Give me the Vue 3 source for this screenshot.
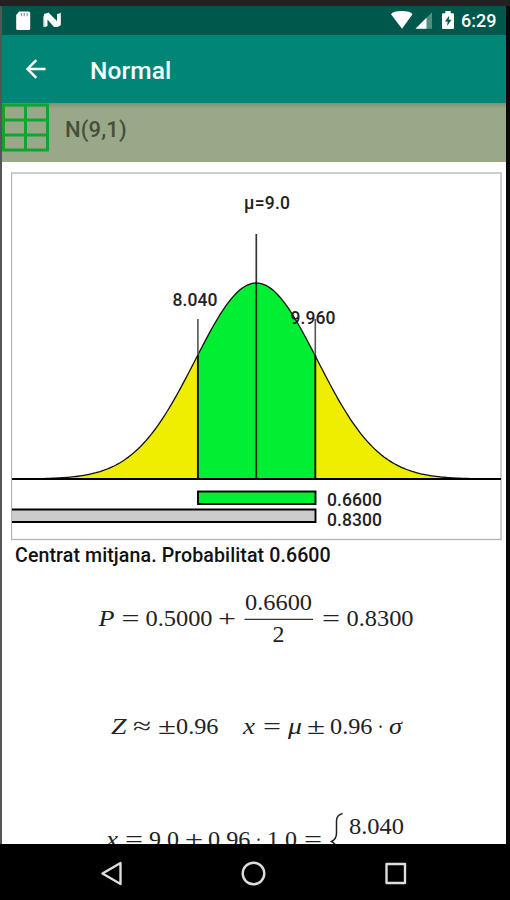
<template>
  <div class="device">
    <div class="screen">
      <header class="status-bar">
        <svg class="status-left" viewBox="0 0 60 29">
          <path d="M19 5.500h9.500q1.500 0 1.500 1.500v15.500q0 1.500-1.500 1.500h-11q-1.500 0-1.500-1.500V9z" transform="translate(-1.800 0)" fill="#fff" />
          <path d="M19.500 7v3.200M22.300 7v3.200M25.200 7v3.200" stroke="#8aa89f" stroke-width="1.300" />
          <path d="M41 10.500 44 8v12l-3 1zM56 8.500l3-2v12.500l-3 1.500z" fill="#9dbbb3" />
          <path d="M42 8 46.500 6.500l8.500 8.500V8l3.500-.8v12L55.500 21H52l-6.500-7.500V20l-3 1.200z" fill="#fff" />
        </svg>
        <div class="status-right">
          <svg class="status-icons" viewBox="0 0 66 29">
            <path d="M0 8.300Q2 5 10.700 5t10.800 3.300L11 22.700z" fill="#fff" />
            <path d="M24.500 22.700 41 6.300v16.400z" fill="#4f8f82" />
            <path d="M24.500 22.700 35.500 11.700v11z" fill="#fff" />
            <path d="M52 7.200h2.300V5h5.400v2.200h2.300q1 0 1 1v13.700q0 1-1 1H52q-1 0-1-1V8.200q0-1 1-1z" fill="#fff" />
            <path d="M58.300 9.500 54 15.500h2.700l-.6 4.500 4.400-6.300h-2.800z" fill="#00574b" />
          </svg>
          <span class="clock">6:29</span>
        </div>
      </header>

      <nav class="app-bar">
        <button class="back" aria-label="Enrere">
          <svg viewBox="0 0 20 20">
            <path d="M19.500 10H1.800M10.300 1.200 1.500 10l8.800 8.800" fill="none" stroke="#fff" stroke-width="2.400" />
          </svg>
        </button>
        <h1>Normal</h1>
      </nav>

      <div class="distribution">
        <svg class="table-icon" viewBox="0 0 47 49">
          <path
            d="M1.500 2h44v45h-44zM23.500 2v45M1.500 17h44M1.500 32h44"
            fill="none"
            stroke="#10a52f"
            stroke-width="3"
          />
        </svg>
        <span>N(9,1)</span>
      </div>

      <main class="content">
        <svg class="chart" viewBox="11 172 491 369">
          <rect x="11.500" y="173" width="489.500" height="366.500" fill="#fff" stroke="#b4b4b4" stroke-width="1.300" />
          <path :d="area(12, lower)" fill="#f0ee00" />
          <path :d="area(upper, 501)" fill="#f0ee00" />
          <path :d="area(lower, upper)" fill="#00ef33" />
          <path :d="curve(40, 472)" fill="none" stroke="#111" stroke-width="1.300" />
          <path d="M12 479H501" stroke="#000" stroke-width="2" />
          <path d="M256.300 234V479" stroke="#000" stroke-opacity=".8" stroke-width="1.700" />
          <path d="M197.900 319V356M315.300 319V356" stroke="#555" stroke-width="1.600" />
          <path d="M197.900 355V479M315.300 355V479" stroke="#061500" stroke-width="1.900" />
          <rect x="198" y="491.500" width="117.500" height="12.500" fill="#00ef33" stroke="#000" stroke-width="1.900" />
          <path d="M12 509.500H315.500V522H12" fill="#ccc" stroke="#000" stroke-width="1.900" />
          <text
            v-for="label in labels"
            :key="label.text"
            :x="label.x"
            :y="label.y"
            :textLength="label.width"
          >{{ label.text }}</text>
        </svg>

        <h2>Centrat mitjana. Probabilitat 0.6600</h2>

        <svg class="formulas" viewBox="2 572 504 272">
          <text
            v-for="(term, index) in terms"
            :key="index"
            :x="term[1]"
            :y="term[2]"
            :textLength="term[3]"
            lengthAdjust="spacingAndGlyphs"
            :class="{ variable: term[4] }"
          >{{ term[0] }}</text>
          <path d="M244.500 619.400H313" stroke="#333" stroke-width="1.200" />
          <path
            d="M342.500 813.500Q336.500 815 336.500 821V833Q336.500 839 331.500 841.500Q336.500 844 336.500 850"
            fill="none"
            stroke="#222"
            stroke-width="1.500"
          />
        </svg>
      </main>
    </div>

    <footer class="nav-bar">
      <svg viewBox="0 0 510 56">
        <g fill="none" stroke="#ddd" stroke-width="2.400" stroke-linejoin="round">
          <path d="M120.500 19v21L102.500 29.500z" />
          <circle cx="253.500" cy="29.500" r="10.800" />
          <rect x="386.500" y="20" width="18.500" height="19" />
        </g>
      </svg>
    </footer>
  </div>
</template>

<script setup>
const mean = 256.3;
const sigma = 61.1;
const baseline = 479;
const peak = 196;
const lower = mean - 0.96 * sigma;
const upper = mean + 0.96 * sigma;

const height = (x) => baseline - peak * Math.exp(-0.5 * ((x - mean) / sigma) ** 2);

const curve = (from, to) => {
  const points = [];
  for (let x = from; x < to; x += 2) {
    points.push(`${x.toFixed(1)} ${height(x).toFixed(2)}`);
  }
  points.push(`${to.toFixed(1)} ${height(to).toFixed(2)}`);
  return `M${points.join('L')}`;
};

const area = (from, to) => `${curve(from, to)}V${baseline}H${from.toFixed(1)}Z`;

const labels = [
  { text: 'μ=9.0', x: 244, y: 209, width: 46 },
  { text: '8.040', x: 172.5, y: 306, width: 45 },
  { text: '9.960', x: 290.5, y: 324, width: 45 },
  { text: '0.6600', x: 327, y: 505.5, width: 55 },
  { text: '0.8300', x: 327, y: 525.5, width: 55 },
];

// text, x, y, width, italic
const terms = [
  ['P', 98.5, 625.5, 16, true],
  ['=', 121.5, 625.5, 18],
  ['0.5000', 145.5, 625.5, 67],
  ['+', 218, 625.5, 18],
  ['0.6600', 245, 609.5, 67],
  ['2', 272.5, 641.5, 12],
  ['=', 322, 625.5, 18],
  ['0.8300', 346.5, 625.5, 67],
  ['Z', 111, 733.5, 15.5, true],
  ['≈', 133, 733.5, 18],
  ['±', 158, 733.5, 18],
  ['0.96', 176, 733.5, 42.5],
  ['x', 243, 733.5, 12, true],
  ['=', 263, 733.5, 18],
  ['μ', 288, 733.5, 14, true],
  ['±', 307, 733.5, 18],
  ['0.96', 330, 733.5, 42.5],
  ['·', 377.5, 733.5, 6],
  ['σ', 389, 733.5, 13, true],
  ['x', 106, 846.5, 12, true],
  ['=', 125, 846.5, 18],
  ['9.0', 149, 846.5, 30],
  ['±', 185, 846.5, 18],
  ['0.96', 208, 846.5, 42.5],
  ['·', 255.5, 846.5, 6],
  ['1.0', 267, 846.5, 30],
  ['=', 304, 846.5, 18],
  ['8.040', 349, 833.5, 55],
];
</script>

<style>
body {
  margin: 0;
}
</style>

<style scoped>
.device {
  width: 510px;
  height: 900px;
  box-sizing: border-box;
  padding-top: 6px;
  background: #222;
  font-family: Roboto, sans-serif;
  overflow: hidden;
}

.screen {
  height: 838px;
  box-sizing: border-box;
  border-left: 2px solid #555;
  border-right: 4px solid #090909;
  background: #fff;
  overflow: hidden;
}

.status-bar {
  height: 29px;
  display: flex;
  justify-content: space-between;
  background: #00574b;
}

.status-left {
  width: 60px;
  height: 29px;
}

.status-right {
  display: flex;
  align-items: center;
  padding-right: 11px;
}

.status-icons {
  width: 66px;
  height: 29px;
}

.clock {
  width: 34px;
  margin-left: 4px;
  color: #fff;
  font-size: 18px;
  font-weight: 500;
  white-space: nowrap;
}

.app-bar {
  height: 68px;
  display: flex;
  align-items: center;
  background: #008577;
  color: #fff;
}

.back {
  display: flex;
  margin: 0 0 0 24px;
  padding: 0;
  border: none;
  background: none;
}

.back svg {
  width: 20px;
  height: 20px;
}

.app-bar h1 {
  margin: 2px 0 0 44px;
  font-size: 24.5px;
  font-weight: 500;
  letter-spacing: 0.1px;
}

.distribution {
  height: 59px;
  display: flex;
  align-items: flex-start;
  background: linear-gradient(#828f74, #99a888 6px);
  color: #454f3b;
  font-size: 22px;
  font-weight: 500;
}

.table-icon {
  width: 47px;
  height: 49px;
}

.distribution span {
  margin: 14px 0 0 16px;
  letter-spacing: 0.15px;
}

.chart {
  display: block;
  width: 491px;
  height: 369px;
  margin: 10px 0 0 9px;
}

.chart text {
  font-size: 17.5px;
  font-weight: 500;
  fill: #222;
}

.content h2 {
  height: 31px;
  margin: 0 0 0 13px;
  color: #111;
  font-size: 19.6px;
  font-weight: 500;
  letter-spacing: 0.09px;
  line-height: 30px;
  white-space: nowrap;
}

.formulas {
  display: block;
  width: 504px;
  height: 272px;
}

.formulas text {
  font-family: "Liberation Serif", serif;
  font-size: 24px;
  fill: #222;
}

.formulas .variable {
  font-style: italic;
}

.nav-bar {
  height: 56px;
  background: #000;
}

.nav-bar svg {
  display: block;
  width: 510px;
  height: 56px;
}
</style>
